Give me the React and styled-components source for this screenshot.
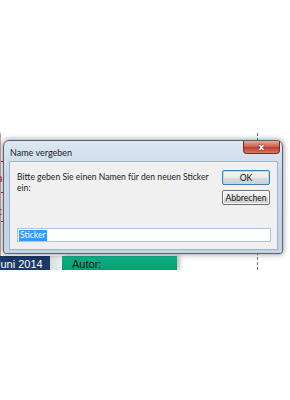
import React from "react";
import styled, { createGlobalStyle } from "styled-components";

const GlobalStyle = createGlobalStyle`
  html, body {
    margin: 0;
    padding: 0;
    background: #ffffff;
  }
  body {
    font-family: Lato, "Noto Sans", sans-serif;
  }
`;

const Page = styled.div`
  width: 290px;
  height: 400px;
  padding-top: 133px;
  box-sizing: border-box;
  overflow: hidden;
`;

const Scene = styled.div`
  position: relative;
  height: 137px;
  overflow: hidden;
`;

const Backdrop = styled.div`
  display: grid;
  grid-template-columns: 257px 1px 1fr;
  grid-template-rows: 1fr 14px;
  height: 100%;
  background: #ffffff;
`;

const Sheet = styled.div`
  display: flex;
  flex-direction: column;
  padding-top: 28px;
  border-left: 1px solid #c9a0a0;
`;

const RedRule = styled.div`
  height: 1px;
  width: 40px;
  background: #b8272b;
  margin-bottom: ${(p) => p.gap}px;
`;

const RedText = styled.div`
  color: #b8272b;
  font-size: 11px;
  line-height: 11px;
  margin-left: -4px;
  margin-bottom: ${(p) => p.gap}px;
`;

const Guide = styled.div`
  grid-row: 1 / span 2;
  grid-column: 2;
  border-left: 1px dashed #777;
`;

const FooterRow = styled.div`
  grid-column: 1;
  display: flex;
  align-items: stretch;
  background: #ffffff;
`;

const DateCell = styled.div`
  width: 50px;
  background: #1b3866;
  color: #ffffff;
  font-family: "Liberation Sans", Arial, sans-serif;
  font-size: 11px;
  line-height: 14px;
  padding-top: 1px;
  white-space: nowrap;
  overflow: hidden;
  text-indent: -5px;
`;

const Gap = styled.div`
  width: 12px;
  background: linear-gradient(90deg, #d8dcdc, #eef0f0);
`;

const AuthorCell = styled.div`
  width: 115px;
  background: linear-gradient(#12b088, #00a070);
  color: #111;
  font-family: "Liberation Sans", Arial, sans-serif;
  font-size: 11px;
  line-height: 14px;
  padding-top: 1px;
  padding-left: 10px;
  box-sizing: border-box;
  box-shadow: 3px 0 4px rgba(0, 0, 0, 0.25);
`;

const Dialog = styled.div`
  position: absolute;
  left: 3px;
  top: 7px;
  width: 280px;
  height: 114px;
  box-sizing: border-box;
  border: 1px solid #5a6370;
  border-radius: 6px 6px 3px 3px;
  background: linear-gradient(#dde7f3, #c9d8ea 30%, #c3d3e6);
  box-shadow: 0 0 5px 1px rgba(0, 0, 0, 0.35);
  display: flex;
  flex-direction: column;
  padding: 0 4px 3px 5px;
`;

const TitleBar = styled.div`
  display: flex;
  align-items: flex-start;
  justify-content: space-between;
  height: 20px;
`;

const Title = styled.div`
  font-size: 9px;
  color: #1a1a1a;
  padding-top: 6px;
  padding-left: 1px;
`;

const CloseButton = styled.div`
  width: 37px;
  height: 13px;
  margin-right: -2px;
  border: 1px solid #7a2a22;
  border-top: none;
  border-radius: 0 0 4px 4px;
  box-sizing: border-box;
  background: linear-gradient(#e9a99a, #d1625a 45%, #c13b2e 55%, #d67a62);
  display: flex;
  align-items: center;
  justify-content: center;
  color: #fff;
  font-family: "DejaVu Sans", sans-serif;
  font-size: 9px;
  font-weight: bold;
  text-shadow: 0 0 2px #5a1a14;
`;

const Panel = styled.div`
  flex: 1;
  background: #f0f0f0;
  border: 1px solid #a3b3c6;
  display: flex;
  flex-direction: column;
  justify-content: space-between;
  padding: 8px 6px 7px 7px;
`;

const TopRow = styled.div`
  display: flex;
  justify-content: space-between;
  align-items: flex-start;
`;

const Prompt = styled.div`
  font-size: 8.6px;
  line-height: 11px;
  color: #1a1a1a;
  width: 200px;
  padding-top: 2px;
`;

const Buttons = styled.div`
  display: flex;
  flex-direction: column;
  gap: 5px;
  padding-right: 1px;
`;

const Button = styled.div`
  width: 48px;
  height: 15px;
  box-sizing: border-box;
  border: 1px solid ${(p) => (p.focused ? "#3c7fb1" : "#707070")};
  border-radius: 2px;
  background: linear-gradient(#f4f4f4, #eaeaea 50%, #dcdcdc 51%, #cfcfcf);
  box-shadow: ${(p) => (p.focused ? "inset 0 0 0 1px #a6e0f8" : "inset 0 0 0 1px #fbfbfb")};
  display: flex;
  align-items: center;
  justify-content: center;
  font-size: 8.6px;
  color: #111;
`;

const Input = styled.div`
  height: 14px;
  box-sizing: border-box;
  border: 1px solid #abc5e2;
  background: #fff;
  display: flex;
  align-items: center;
  padding-left: 1px;
`;

const Selected = styled.span`
  background: #3399ff;
  color: #fff;
  font-size: 8.6px;
  line-height: 11px;
  padding: 0 1px;
`;

export default function App() {
  return (
    <>
      <GlobalStyle />
      <Page>
        <Scene>
          <Backdrop>
            <Sheet>
              <RedRule gap={10} />
              <RedText gap={9}>a</RedText>
              <RedRule gap={12} />
              <RedText gap={5}>c</RedText>
              <RedRule gap={0} />
            </Sheet>
            <Guide />
            <div />
            <FooterRow>
              <DateCell>Juni 2014</DateCell>
              <Gap />
              <AuthorCell>Autor:</AuthorCell>
            </FooterRow>
          </Backdrop>
          <Dialog>
            <TitleBar>
              <Title>Name vergeben</Title>
              <CloseButton>x</CloseButton>
            </TitleBar>
            <Panel>
              <TopRow>
                <Prompt>Bitte geben Sie einen Namen für den neuen Sticker ein:</Prompt>
                <Buttons>
                  <Button focused>OK</Button>
                  <Button>Abbrechen</Button>
                </Buttons>
              </TopRow>
              <Input>
                <Selected>Sticker</Selected>
              </Input>
            </Panel>
          </Dialog>
        </Scene>
      </Page>
    </>
  );
}
